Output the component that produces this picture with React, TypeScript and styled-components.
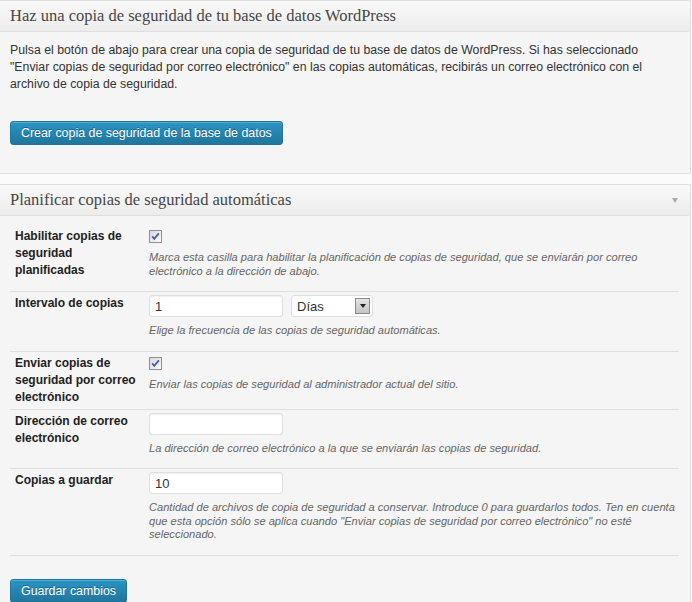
import styled, { createGlobalStyle } from 'styled-components'

const GlobalStyle = createGlobalStyle`
  body {
    margin: 0;
    background: #fbfbfb;
    font-family: "Liberation Sans", Arial, sans-serif;
    font-size: 12px;
    color: #333;
  }
`

type Row = {
  id: string
  label: string
  control: 'check' | 'interval' | 'text'
  value?: string
  help: string
}

const rows: Row[] = [
  {
    id: 'enable',
    label: 'Habilitar copias de seguridad planificadas',
    control: 'check',
    help: 'Marca esta casilla para habilitar la planificación de copias de seguridad, que se enviarán por correo electrónico a la dirección de abajo.',
  },
  {
    id: 'interval',
    label: 'Intervalo de copias',
    control: 'interval',
    value: '1',
    help: 'Elige la frecuencia de las copias de seguridad automáticas.',
  },
  {
    id: 'email',
    label: 'Enviar copias de seguridad por correo electrónico',
    control: 'check',
    help: 'Enviar las copias de seguridad al administrador actual del sitio.',
  },
  {
    id: 'address',
    label: 'Dirección de correo electrónico',
    control: 'text',
    value: '',
    help: 'La dirección de correo electrónico a la que se enviarán las copias de seguridad.',
  },
  {
    id: 'keep',
    label: 'Copias a guardar',
    control: 'text',
    value: '10',
    help: 'Cantidad de archivos de copia de seguridad a conservar. Introduce 0 para guardarlos todos. Ten en cuenta que esta opción sólo se aplica cuando "Enviar copias de seguridad por correo electrónico" no esté seleccionado.',
  },
]

const Page = styled.div`
  padding-right: 1px;
`

const Postbox = styled.section`
  border: 1px solid #dfdfdf;
  border-left: 0;
  background: #f5f5f5;
  margin-bottom: 10px;
`

const Header = styled.div`
  display: flex;
  align-items: center;
  justify-content: space-between;
  height: 30px;
  padding: 0 10px;
  background: linear-gradient(to top, #ececec, #f9f9f9);
  border-bottom: 1px solid #dfdfdf;
`

const Title = styled.h3`
  margin: 0;
  font-family: "Liberation Serif", "Times New Roman", serif;
  font-size: 16.5px;
  font-weight: normal;
  color: #464646;
  line-height: 30px;
`

const Toggle = styled.span`
  width: 0;
  height: 0;
  border-left: 3px solid transparent;
  border-right: 3px solid transparent;
  border-top: 5px solid #aaa;
  margin-right: 2px;
`

const Body = styled.div<{ $compact?: boolean }>`
  padding: ${(p) => (p.$compact ? '9px 11px 20px 10px' : '10px 12px 28px 10px')};
`

const Intro = styled.p`
  margin: 0;
  max-width: 650px;
  font-size: 12.3px;
  line-height: 17px;
`

const PrimaryButton = styled.button<{ $gap: number }>`
  display: block;
  margin-top: ${(p) => p.$gap}px;
  height: 24px;
  padding: 0 10px;
  border: 1px solid #21759b;
  border-radius: 3px;
  background: linear-gradient(to bottom, #2a95c5, #21759b);
  box-shadow: inset 0 1px 0 rgba(120, 200, 230, 0.5);
  color: #fff;
  text-shadow: 0 -1px 0 rgba(0, 0, 0, 0.3);
  font-family: "Liberation Sans", Arial, sans-serif;
  font-size: 12.4px;
  cursor: pointer;
`

const Table = styled.table`
  width: 669px;
  border-collapse: collapse;
`

const Tr = styled.tr`
  border-bottom: 1px solid #dfdfdf;
`

const Th = styled.th`
  width: 125px;
  padding: 3px 9px 3px 5px;
  text-align: left;
  vertical-align: top;
  font-weight: bold;
  color: #222;
  line-height: 17px;
`

const Td = styled.td`
  padding: 3px 0 13px 0;
  vertical-align: top;
`

const Controls = styled.div`
  display: flex;
  align-items: center;
  gap: 8px;
`

const CheckBox = styled.span`
  display: block;
  width: 13px;
  height: 13px;
  margin-top: 2px;
`

const TextInput = styled.input`
  box-sizing: border-box;
  width: 134px;
  height: 22px;
  padding: 0 5px;
  border: 1px solid #dfdfdf;
  border-radius: 3px;
  background: #fff;
  box-shadow: inset 0 1px 2px rgba(0, 0, 0, 0.07);
  font-family: "Liberation Sans", Arial, sans-serif;
  font-size: 13px;
  color: #333;
`

const Select = styled.div`
  box-sizing: border-box;
  display: flex;
  align-items: center;
  justify-content: space-between;
  width: 82px;
  height: 22px;
  padding: 0 2px 0 5px;
  border: 1px solid #dfdfdf;
  border-radius: 3px;
  background: #fff;
  font-size: 13px;
  color: #333;
`

const SelectArrow = styled.span`
  box-sizing: border-box;
  display: flex;
  align-items: center;
  justify-content: center;
  width: 15px;
  height: 16px;
  border: 1px solid #8a8a8a;
  background: linear-gradient(to bottom, #e4e4e4, #c4c4c4);

  &::after {
    content: '';
    border-left: 3px solid transparent;
    border-right: 3px solid transparent;
    border-top: 4px solid #222;
  }
`

const Help = styled.p<{ $gap: number }>`
  margin: ${(p) => p.$gap}px 0 0;
  font-size: 11.1px;
  font-style: italic;
  line-height: 13.5px;
  color: #666;
`

function Check() {
  return (
    <CheckBox>
      <svg width="13" height="13" viewBox="0 0 13 13">
        <defs>
          <linearGradient id="cbg" x1="0" y1="0" x2="1" y2="1">
            <stop offset="0" stopColor="#d8d8d8" />
            <stop offset="1" stopColor="#fdfdfd" />
          </linearGradient>
        </defs>
        <rect x="0.5" y="0.5" width="12" height="12" fill="url(#cbg)" stroke="#8e8f96" />
        <path d="M3.2 6.3 L5.3 8.8 L9.8 3.4" fill="none" stroke="#4a5db0" strokeWidth="1.8" />
      </svg>
    </CheckBox>
  )
}

function Field({ row }: { row: Row }) {
  if (row.control === 'check') {
    return (
      <>
        <Check />
        <Help $gap={8}>{row.help}</Help>
      </>
    )
  }
  return (
    <>
      <Controls>
        <TextInput defaultValue={row.value} />
        {row.control === 'interval' && (
          <Select>
            Días
            <SelectArrow />
          </Select>
        )}
      </Controls>
      <Help $gap={7}>{row.help}</Help>
    </>
  )
}

export default function App() {
  return (
    <Page>
      <GlobalStyle />
      <Postbox>
        <Header>
          <Title>Haz una copia de seguridad de tu base de datos WordPress</Title>
        </Header>
        <Body>
          <Intro>
            Pulsa el botón de abajo para crear una copia de seguridad de tu base de datos de WordPress. Si has
            seleccionado "Enviar copias de seguridad por correo electrónico" en las copias automáticas, recibirás un
            correo electrónico con el archivo de copia de seguridad.
          </Intro>
          <PrimaryButton $gap={28}>Crear copia de seguridad de la base de datos</PrimaryButton>
        </Body>
      </Postbox>
      <Postbox>
        <Header>
          <Title>Planificar copias de seguridad automáticas</Title>
          <Toggle />
        </Header>
        <Body $compact>
          <Table>
            <tbody>
              {rows.map((row) => (
                <Tr key={row.id}>
                  <Th>{row.label}</Th>
                  <Td>
                    <Field row={row} />
                  </Td>
                </Tr>
              ))}
            </tbody>
          </Table>
          <PrimaryButton $gap={23}>Guardar cambios</PrimaryButton>
        </Body>
      </Postbox>
    </Page>
  )
}
